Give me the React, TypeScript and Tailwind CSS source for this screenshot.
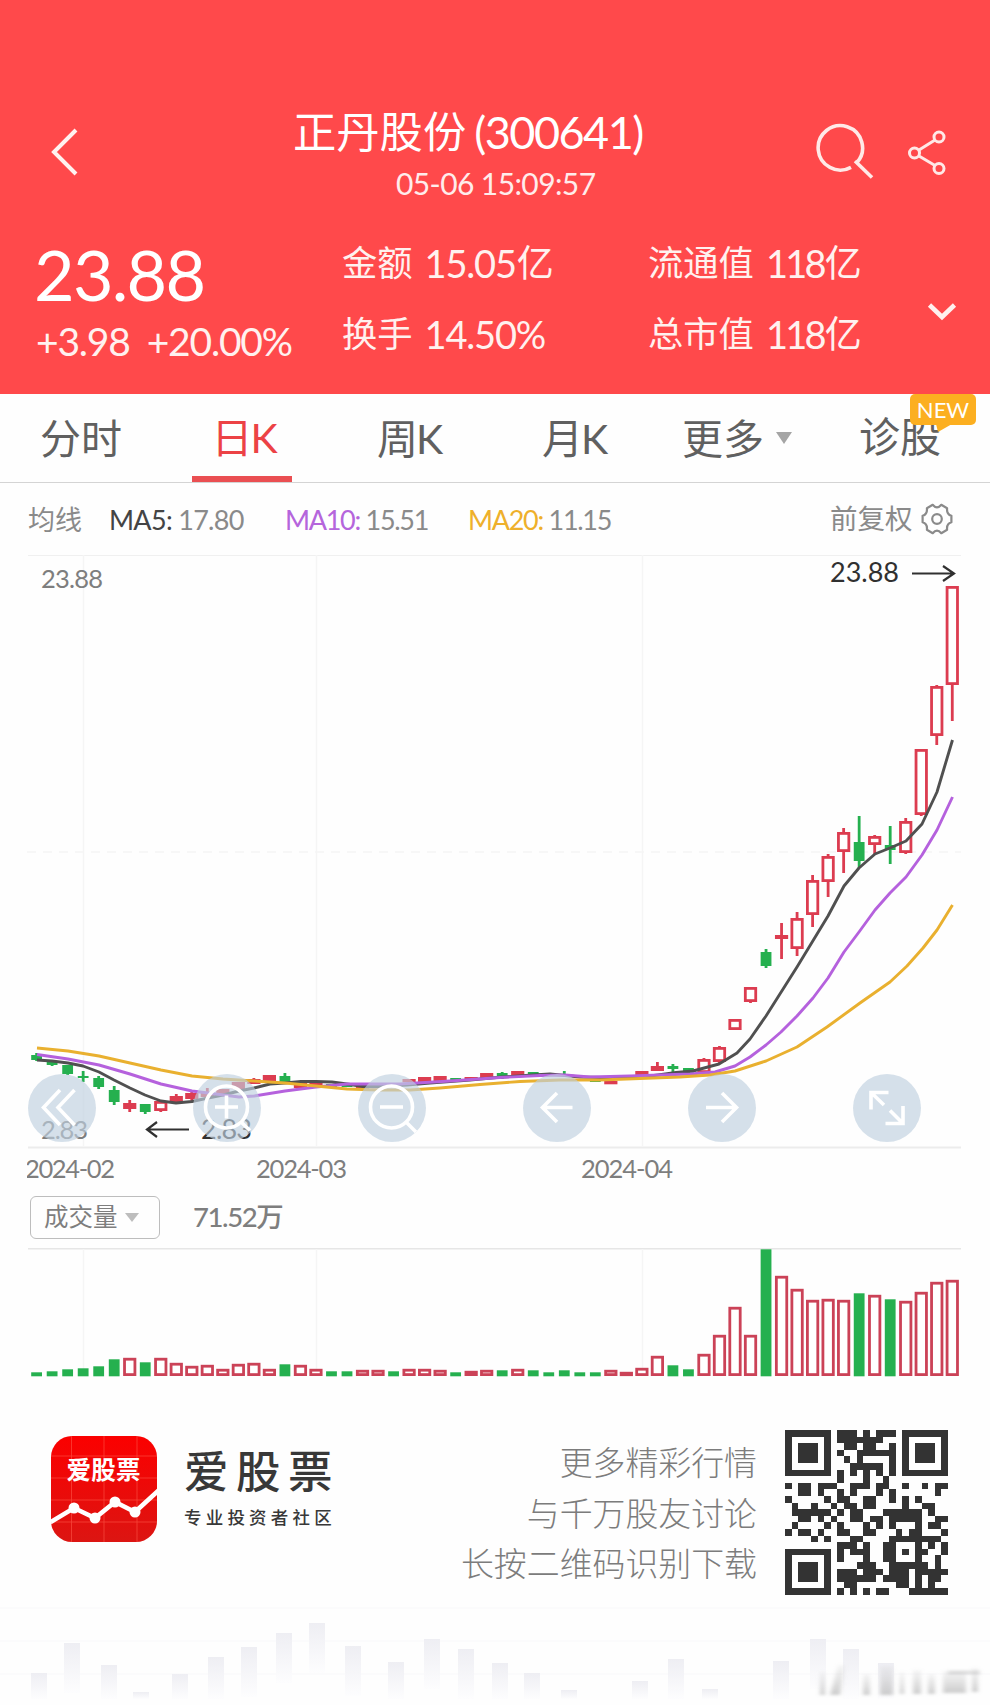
import type { ReactNode } from 'react';

type Candle = {
  up: boolean;
  open: number;
  close: number;
  high: number;
  low: number;
};

const STEP = 15.52;
const FIRST_X = 9.6;

// [up, body top, body bottom, wick top, wick bottom] in chart pixels
const candleRows: [number, number, number, number, number][] = [
  [0, 500, 505, 498, 506],
  [0, 506, 510, 505, 511],
  [0, 510, 519, 510, 520],
  [0, 521, 523, 516, 527],
  [0, 523, 532, 521, 534],
  [0, 535, 547, 531, 550],
  [1, 548, 554, 545, 557],
  [0, 549, 557, 549, 559],
  [1, 546, 556, 546, 557],
  [1, 541, 547, 539, 547],
  [1, 538, 544, 537, 546],
  [1, 537, 542, 533, 542],
  [1, 534, 539, 534, 539],
  [1, 527, 534, 527, 534],
  [1, 524, 529, 523, 529],
  [1, 520, 526, 520, 526],
  [0, 521, 528, 518, 528],
  [1, 528, 533, 528, 533],
  [1, 528, 531, 528, 531],
  [0, 529, 532, 529, 532],
  [0, 530, 532, 530, 532],
  [1, 531, 533, 531, 533],
  [1, 530, 532, 530, 532],
  [0, 528, 530, 528, 530],
  [1, 524, 527, 524, 527],
  [1, 522, 527, 522, 527],
  [1, 521, 526, 521, 526],
  [0, 523, 525, 523, 525],
  [1, 522, 525, 522, 525],
  [1, 518, 523, 518, 523],
  [0, 518, 522, 517, 524],
  [1, 516, 521, 516, 521],
  [0, 517, 519, 517, 519],
  [0, 519, 520, 519, 521],
  [0, 519, 520, 516, 521],
  [0, 521, 523, 521, 523],
  [0, 525, 527, 525, 527],
  [1, 526, 528, 526, 528],
  [1, 520, 521, 520, 521],
  [1, 516, 520, 516, 520],
  [1, 511, 516, 507, 516],
  [0, 511, 514, 509, 517],
  [0, 513, 518, 513, 519],
  [1, 504, 518, 503, 518],
  [1, 492, 507, 491, 509],
  [1, 464, 475, 464, 475],
  [1, 432, 447, 432, 448],
  [0, 397, 411, 394, 413],
  [1, 380, 384, 368, 404],
  [1, 363, 394, 357, 401],
  [1, 325, 360, 320, 372],
  [1, 301, 327, 299, 342],
  [1, 277, 297, 273, 318],
  [0, 287, 306, 261, 313],
  [1, 281, 290, 280, 300],
  [0, 290, 295, 271, 309],
  [1, 266, 298, 263, 299],
  [1, 194, 260, 194, 261],
  [1, 131, 181, 130, 190],
  [1, 31, 130, 31, 166],
];

const candles: Candle[] = candleRows.map(([up, top, bottom, high, low]) => ({
  up: up === 1,
  open: up ? bottom : top,
  close: up ? top : bottom,
  high,
  low,
}));

const volumes = [
  4, 5, 7, 8, 10, 17, 18, 14, 18, 13, 10, 11, 7, 12, 13, 7, 12, 11, 7, 5,
  5, 6, 6, 5, 7, 7, 6, 4, 5, 6, 6, 7, 6, 4, 6, 4, 4, 6, 4, 8,
  20, 11, 7, 22, 41, 69, 41, 127, 100, 87, 76, 77, 76, 83, 81, 77, 75, 84, 94, 96,
];
const volumeDown = [0, 1, 2, 3, 4, 5, 7, 16, 19, 20, 23, 27, 30, 32, 33, 34, 35, 36, 41, 42, 47, 53, 55];

const ma5 =
  '10,505 25,506 41,508 56,511 72,517 87,525 103,533 118,540 134,546 149,548 165,546.5 181,543 196,540 212,536 227,533 243,529 258,528 274,526.5 289,526.5 305,527 320,529 336,531.5 351,531.5 380,530 403,528 443,525 475,522 506,520 523,519 553,522 593,523 615,522 631,520 649,517.5 666,516 692,509 710,498 723,484 739,461 770,412 801,361 817,331 832,313 848,299 863,293 879,286 895,269 910,237 925.5,185';
const ma10 =
  '10,499.5 41,504 72,510 103,519 134,529 165,536 181,538 212,542 227,541 258,536 289,532 320,529 351,529 373,529 423,526 473,522.5 513,520.5 538,520 563,522 603,521 633,520 663,519 688,517 708,511 723,502 739,490 754,477 770,461 786,443 801,423 817,397 832,377 848,355 863,338 879,322 895,300 910,275 925.5,242';
const ma20 =
  '10,493 41,496 72,501 103,508 134,515 165,521 196,524 227,526 258,528 289,531 320,534 351,535 383,535 413,533 453,529.5 493,526.5 533,525 573,525 613,523.5 653,522 683,520 708,516 739,506 770,492 800,472 833,448 863,427 880,411 896,393 910,375 925.5,350';

const qrRows = [
  '1111111011101011101111111',
  '1000001011111110001000001',
  '1011101001101100101011101',
  '1011101010011111101011101',
  '1011101001010000101011101',
  '1000001000111110101000001',
  '1111111010101010101111111',
  '0000000010001001000000000',
  '1011011100111011001001011',
  '0011010010100010100000010',
  '1000001011001100101010000',
  '0100100101101100001001100',
  '0111111010110001111110100',
  '0011010100110110111110011',
  '0100001010001010100010110',
  '1011010011001100010110001',
  '0000101000110000111111110',
  '0000000011101001100010101',
  '1111111010111001101011001',
  '1000001010001001100010010',
  '1011101000011100111111010',
  '1011101011101110111011111',
  '1011101011111101111010110',
  '1000001001100000011010100',
  '1111111010101011000111111',
];

const footerBars = [
  [31, 1673], [64, 1643], [101, 1665], [133, 1692], [172, 1674], [208, 1657],
  [241, 1647], [276, 1633], [309, 1623], [345, 1646], [388, 1662], [424, 1639],
  [458, 1649], [492, 1663], [524, 1673], [561, 1690], [632, 1681], [668, 1659],
  [702, 1689], [773, 1661], [810, 1639], [843, 1649], [878, 1663],
];

const UP = '#dc3c50';
const DOWN = '#25b04f';

function Stat({ label, value, unit = '', tight = false }: { label: string; value: string; unit?: string; tight?: boolean }) {
  return (
    <div className="flex h-[71px] items-center whitespace-nowrap text-[#fff1ef]">
      <span className="text-[35.300px]">{label}</span>
      <span className={`ml-[12px] text-[38px] ${tight ? 'tracking-[-2.800px]' : 'tracking-[-1.200px]'}`}>{value}</span>
      <span className="ml-[1px] text-[37px]">{unit}</span>
    </div>
  );
}

function RoundButton({ children }: { children: ReactNode }) {
  return (
    <button className="flex size-[68px] items-center justify-center rounded-full bg-[#becfdf]/65">
      <svg width="68" height="68" viewBox="0 0 68 68" fill="none" stroke="white" strokeWidth="3.600">
        {children}
      </svg>
    </button>
  );
}

function Header() {
  return (
    <header className="flex h-[394px] flex-col bg-[#ff494b] pt-[103px] text-white">
      <div className="flex h-[104px] items-start">
        <svg className="ml-[50px] mt-[23px]" width="30" height="52" viewBox="0 0 30 52" fill="none" stroke="#fff2f0" strokeWidth="4">
          <path d="M26 4 L4 26 L26 48" />
        </svg>
        <div className="ml-[213px] w-[352px] whitespace-nowrap">
          <div className="flex h-[58px] items-center">
            <span className="text-[43.3px]">正丹股份</span>
            <span className="ml-[8px] text-[45px] tracking-[-1.500px]">(300641)</span>
          </div>
          <div className="ml-[103px] mt-[1px] flex h-[42px] items-center text-[30px] text-[#ffeceb] tracking-[-0.6px]">
            05-06 15:09:57
          </div>
        </div>
        <svg className="ml-[171px] mt-[17px]" width="58" height="62" viewBox="0 0 58 62" fill="none" stroke="#ffe9e7" strokeWidth="3.6">
          <path d="M35 47.300 A22.200 22.200 0 1 1 41 42.500" />
          <path d="M39 41 L56 57.500" />
        </svg>
        <svg className="ml-[30px] mt-[25px]" width="46" height="50" viewBox="0 0 46 50" fill="none" stroke="#ffe9e7" strokeWidth="3">
          <circle cx="10.5" cy="25" r="5" />
          <circle cx="35" cy="9" r="5" />
          <circle cx="35" cy="40.500" r="5" />
          <path d="M15 22 L31 12 M15 28 L31 37.500" />
        </svg>
      </div>
      <div className="flex">
        <div className="ml-[34px] w-[308px] whitespace-nowrap">
          <div className="mt-[27px] flex h-[80px] items-center text-[70px] tracking-[-1.700px]">23.88</div>
          <div className="ml-[2px] mt-[1px] flex h-[52px] items-center gap-[17px] text-[39px] tracking-[-1.200px] text-[#fff1ef]">
            <span>+3.98</span>
            <span>+20.00%</span>
          </div>
        </div>
        <div className="mt-[20px] w-[306px]">
          <Stat label="金额" value="15.05" unit="亿" />
          <Stat label="换手" value="14.50%" />
        </div>
        <div className="mt-[20px] w-[279px]">
          <Stat label="流通值" value="118" unit="亿" tight />
          <Stat label="总市值" value="118" unit="亿" tight />
        </div>
        <svg className="mt-[92px]" width="30" height="24" viewBox="0 0 30 24" fill="none" stroke="#fff0ee" strokeWidth="4.600">
          <path d="M2.500 6 L15 18 L27.500 6" />
        </svg>
      </div>
    </header>
  );
}

function Tabs() {
  return (
    <nav className="flex h-[89px] items-center whitespace-nowrap border-b border-[#d4d4d4] text-[41px] text-[#606060]">
      <span className="w-[151px] pl-[40px]">分时</span>
      <span className="ml-[41px] flex h-[88px] w-[100px] items-center justify-center border-b-[6px] border-[#ea4f52] pl-[5px] pt-[5px] text-[#ec4245]">
        日<span className="-ml-[2px] text-[41px]">K</span>
      </span>
      <span className="ml-[85px] w-[165px]">
        周<span className="-ml-[2px] text-[41px]">K</span>
      </span>
      <span className="w-[140px]">
        月<span className="-ml-[2px] text-[41px]">K</span>
      </span>
      <span>更多</span>
      <svg className="ml-[12px]" width="16" height="12" viewBox="0 0 16 12">
        <path d="M0 0 H16 L8 12 Z" fill="#a5a5a5" />
      </svg>
      <span className="relative ml-[67px] self-stretch pt-[22px]">
        诊股
        <span className="absolute left-[51px] top-0 flex h-[31px] w-[66px] items-center justify-center rounded-[5px] bg-[#fcaf20] text-[22px] text-white">
          NEW
          <svg className="absolute left-[26px] top-[30px]" width="16" height="8" viewBox="0 0 16 8">
            <path d="M0 0 H16 L2 8 Z" fill="#fcaf20" />
          </svg>
        </span>
      </span>
    </nav>
  );
}

function MaRow() {
  return (
    <div className="flex h-[72px] items-center whitespace-nowrap text-[27px] text-[#8a8a8a]">
      <span className="w-[80px] pl-[28px]">均线</span>
      <span className="ml-[29px] w-[176px] tracking-[-0.700px]">
        <span className="text-[#444]">MA5:</span> 17.80
      </span>
      <span className="w-[183px] tracking-[-1.300px]">
        <span className="text-[#b565dc]">MA10:</span> 15.51
      </span>
      <span className="w-[362px] tracking-[-1.300px]">
        <span className="text-[#eeb02b]">MA20:</span> 11.15
      </span>
      <span className="text-[27.500px]">前复权</span>
      <svg className="ml-[8px]" width="32" height="32" viewBox="0 0 32 32" fill="none" stroke="#8a8a8a" strokeWidth="2.200" strokeLinejoin="round">
        <path d="M30.400 12.700 V19.300 Q25.400 20.500 26.100 26.800 L20.300 30.200 Q16 25 11.700 30.200 L5.900 26.800 Q6.600 20.500 1.600 19.300 V12.700 Q6.600 11.500 5.900 5.200 L11.700 1.800 Q16 7 20.300 1.800 L26.100 5.200 Q25.400 11.500 30.400 12.700 Z" />
        <circle cx="16" cy="16" r="4.800" />
      </svg>
    </div>
  );
}

function CandleChart() {
  return (
    <svg className="ml-[27px] block" width="936" height="640" viewBox="0 0 936 640">
      <g stroke="#ececec" strokeWidth="1.500">
        <path d="M1 -.25 H934 M1 592.500 H934" strokeWidth="2" />
        <path d="M56.500 0 V592 M289.500 0 V592 M615.500 0 V592" stroke="#f5f5f5" />
        <path d="M0 297 H934" strokeDasharray="9 7" stroke="#f5f5f5" />
      </g>
      {candles.map((c, i) => {
        const x = FIRST_X + i * STEP;
        const top = Math.min(c.open, c.close);
        const h = Math.abs(c.close - c.open);
        const color = c.up ? UP : DOWN;
        return (
          <g key={i} stroke={color} strokeWidth="2.800">
            <path d={`M${x} ${c.high} V${top} M${x} ${top + h} V${c.low}`} />
            {c.up ? (
              <rect x={x - 5.2} y={top + 1.4} width="10.400" height={Math.max(h - 2.8, 0.5)} fill={h < 8 ? UP : 'white'} />
            ) : (
              <rect x={x - 5.4} y={top} width="10.800" height={h} fill={color} stroke="none" />
            )}
          </g>
        );
      })}
      <g fill="none" strokeWidth="2.900" strokeLinejoin="round">
        <polyline points={ma5} stroke="#505050" />
        <polyline points={ma10} stroke="#b561dd" />
        <polyline points={ma20} stroke="#e9b02f" />
      </g>
      <g fill="#7e7e7e" fontSize="25.500">
        <text x="14" y="32.500" textLength="62">23.88</text>
        <text x="14" y="584" textLength="47">2.83</text>
        <text x="-2" y="623" textLength="90">2024-02</text>
        <text x="229" y="623" textLength="91">2024-03</text>
        <text x="554" y="623" textLength="92">2024-04</text>
      </g>
      <g fill="#303030" fontSize="27">
        <text x="803" y="27" textLength="69">23.88</text>
        <text x="174" y="584" textLength="51">2.83</text>
      </g>
      <g fill="none" stroke="#303030" strokeWidth="2.200">
        <path d="M885 18.500 H927 M916 11 L927 18.500 L916 26" />
        <path d="M162 574.500 H120 M130 567 L120 574.500 L130 582" />
      </g>
    </svg>
  );
}

function ChartControls() {
  return (
    <div className="absolute left-[28px] top-[519px] flex gap-[97px]">
      <RoundButton>
        <path d="M32 16 L15.500 33.500 L32 51 M46.500 16 L30 33.500 L46.500 51" />
      </RoundButton>
      <RoundButton>
        <circle cx="33.500" cy="33" r="21" />
        <path d="M22 33 H45 M33.500 21.500 V44.500 M48 48 L57 56.500" />
      </RoundButton>
      <RoundButton>
        <circle cx="33.500" cy="33" r="21" />
        <path d="M22 33 H45 M48 48 L58 58" />
      </RoundButton>
      <RoundButton>
        <path d="M49.500 33.500 H20 M34 19 L19.500 33.500 L34 48" />
      </RoundButton>
      <RoundButton>
        <path d="M18 33.500 H48 M34 19 L48.500 33.500 L34 48" />
      </RoundButton>
      <RoundButton>
        <path d="M18 35.500 V18.500 H35.500 M18 18.500 L31 31 M50 32 V49.500 H32.500 M50 49.500 L37 36.500" />
      </RoundButton>
    </div>
  );
}

function VolumeChart() {
  return (
    <svg className="ml-[27px] block" width="936" height="131" viewBox="0 0 936 131">
      <path d="M1 .75 H934" stroke="#e6e6e6" strokeWidth="1.500" />
      <path d="M56.500 1 V128 M289.500 1 V128 M615.500 1 V128" stroke="#f5f5f5" strokeWidth="1.500" />
      {volumes.map((h, i) => {
        const x = FIRST_X + i * STEP;
        return volumeDown.includes(i) ? (
          <rect key={i} x={x - 5.4} y={128.3 - h} width="10.800" height={h} fill={DOWN} />
        ) : (
          <rect key={i} x={x - 5.2} y={129.2 - h} width="10.400" height={Math.max(h - 2.6, 1.5)} fill={h < 6 ? UP : 'white'} stroke="#cb4257" strokeWidth="2.800" />
        );
      })}
    </svg>
  );
}

function Logo() {
  return (
    <svg width="106" height="106" viewBox="0 0 106 106">
      <defs>
        <linearGradient id="logoRed" x1="0" y1="0" x2="0" y2="1">
          <stop offset="0" stopColor="#fb0000" />
          <stop offset="1" stopColor="#dc1512" />
        </linearGradient>
        <clipPath id="logoClip">
          <rect width="106" height="106" rx="21" />
        </clipPath>
      </defs>
      <g clipPath="url(#logoClip)">
        <rect width="106" height="106" fill="url(#logoRed)" />
        <path d="M20.500 0 V106 M53 0 V106 M86 0 V106 M0 20 H106 M0 42 H106 M0 64 H106 M0 86 H106" stroke="#ff5a4c" strokeWidth=".8" opacity=".7" />
        <path d="M-2 87 L23 72 L44 82 L64 66 L84 76 L108 54" fill="none" stroke="white" strokeWidth="4.500" />
        <g fill="white">
          <circle cx="23" cy="72" r="5.500" />
          <circle cx="44" cy="82" r="5.500" />
          <circle cx="64" cy="66" r="5.500" />
          <circle cx="84" cy="76" r="5.500" />
        </g>
        <text x="15.500" y="43" fontSize="24.500" fontWeight="700" fill="white" textLength="74">爱股票</text>
      </g>
    </svg>
  );
}

function QrCode() {
  return (
    <svg width="163" height="165" viewBox="0 0 25 25" preserveAspectRatio="none" shapeRendering="crispEdges">
      {qrRows.map((row, y) =>
        row.split('').map((cell, x) =>
          cell === '1' ? <rect key={`${x}-${y}`} x={x} y={y} width="1" height="1" fill="#333" /> : null
        )
      )}
    </svg>
  );
}

function FooterPattern() {
  return (
    <svg className="block" width="990" height="110" viewBox="0 1595 990 110">
      <defs>
        <linearGradient id="barFade" x1="0" y1="0" x2="0" y2="1">
          <stop offset="0" stopColor="#eeeef3" />
          <stop offset="1" stopColor="#fdfdfe" />
        </linearGradient>
        <linearGradient id="markFade" x1="0" y1="0" x2="0" y2="1">
          <stop offset="0" stopColor="#aaa" stopOpacity=".1" />
          <stop offset="1" stopColor="#999" stopOpacity=".5" />
        </linearGradient>
        <filter id="soft">
          <feGaussianBlur stdDeviation="2.2 1.5" />
        </filter>
      </defs>
      <path d="M0 1608 H990 M0 1641 H990 M0 1674 H990" stroke="#f8f8fa" />
      {footerBars.map(([x, y]) => (
        <rect key={x} x={x} y={y} width="16" height={Math.min(50, 1699 - y)} fill="url(#barFade)" />
      ))}
      <g fill="url(#markFade)" filter="url(#soft)">
        <rect x="820" y="1672" width="5" height="23" />
        <path d="M830 1695 L838 1665 H845 L840 1695 Z" />
        <rect x="863" y="1674" width="7" height="21" />
        <rect x="880" y="1666" width="13" height="29" />
        <rect x="900" y="1672" width="4" height="22" />
        <rect x="913" y="1670" width="8" height="24" />
        <rect x="928" y="1674" width="7" height="20" />
        <rect x="943" y="1671" width="23" height="22" />
        <rect x="948" y="1670" width="32" height="4" />
        <rect x="972" y="1668" width="6" height="24" />
      </g>
    </svg>
  );
}

export default function App() {
  return (
    <main className="h-[1705px] w-[990px] overflow-hidden bg-[#fefefe] font-['Lato','Noto_Sans_CJK_SC',sans-serif] leading-none">
      <Header />
      <Tabs />
      <MaRow />
      <section className="relative h-[640px]">
        <CandleChart />
        <ChartControls />
      </section>
      <div className="flex h-[53px] items-start whitespace-nowrap text-[#7e7e7e]">
        <button className="ml-[30px] mt-[1px] flex h-[43px] w-[130px] items-center rounded-[6px] border-[1.5px] border-[#bdbdbd] pl-[13px] text-[24.5px]">
          成交量
          <svg className="ml-[7px]" width="14" height="9" viewBox="0 0 14 9">
            <path d="M0 0 H14 L7 9 Z" fill="#bdbdbd" />
          </svg>
        </button>
        <span className="ml-[33px] flex h-[43px] items-center text-[27.500px] font-medium tracking-[-1.400px]">71.52万</span>
      </div>
      <VolumeChart />
      <footer>
        <div className="flex h-[216px] items-start pl-[51px] pt-[51px]">
          <div className="mt-[6px] flex">
            <Logo />
            <div className="ml-[27px] whitespace-nowrap text-[#383838]">
              <div className="mt-[10px] flex h-[50px] items-center text-[44.500px] font-medium tracking-[7.500px]">爱股票</div>
              <div className="mt-[12px] flex h-[20px] items-center text-[17.500px] font-medium tracking-[4.200px]">专业投资者社区</div>
            </div>
          </div>
          <div className="ml-auto whitespace-nowrap text-right text-[32.900px] font-light leading-[50.500px] text-[#7c7c7c]">
            <p className="mt-[8px]">更多精彩行情</p>
            <p>与千万股友讨论</p>
            <p>长按二维码识别下载</p>
          </div>
          <div className="ml-[28px] mr-[42px]">
            <QrCode />
          </div>
        </div>
        <FooterPattern />
      </footer>
    </main>
  );
}
